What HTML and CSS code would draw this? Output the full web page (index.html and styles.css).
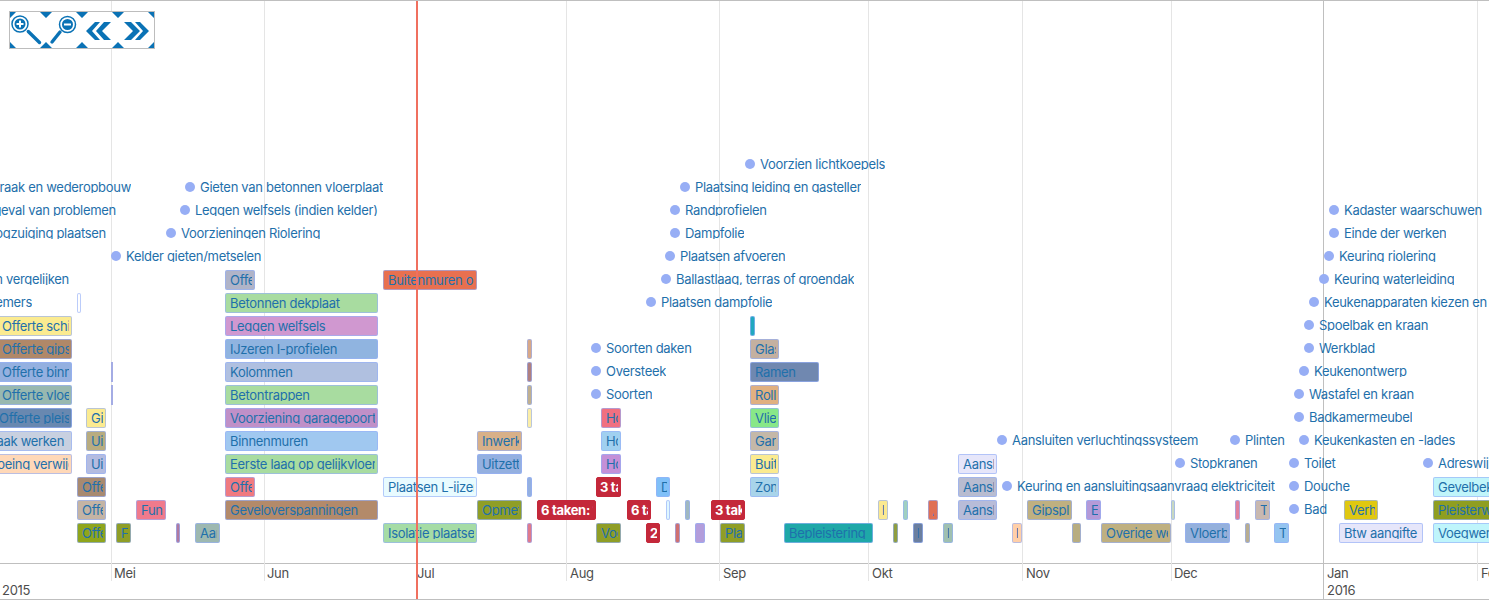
FILE: index.html
```html
<!DOCTYPE html>
<html lang="nl">
<head>
<meta charset="utf-8">
<title>Tijdlijn</title>
<link rel="stylesheet" href="styles.css">
</head>
<body>
<div class="timeline">
  <div class="canvas">
    <i class="grid" style="left:111px"></i><i class="grid" style="left:264px"></i><i class="grid" style="left:416px"></i><i class="grid" style="left:566px"></i><i class="grid" style="left:719px"></i><i class="grid" style="left:868px"></i><i class="grid" style="left:1022px"></i><i class="grid" style="left:1171px"></i><i class="grid major" style="left:1323px"></i><i class="grid" style="left:1477px"></i>

    <div class="nav">
      <div class="nav-btn"><svg viewBox="0 0 36 36"><path class="corner" d="M0 0h6L0 6zM36 0h-6l6 6zM0 36h6l-6-6zM36 36h-6l6-6z"/><circle class="ring" cx="10" cy="12" r="8"/><circle class="disc" cx="10" cy="12" r="5.500"/><path class="glyph" d="M6.500 12h7M10 8.500v7"/><path class="handle" d="M18.300 19.500L29.500 30.500"/></svg></div>
      <div class="nav-btn"><svg viewBox="0 0 36 36"><path class="corner" d="M0 0h6L0 6zM36 0h-6l6 6zM0 36h6l-6-6zM36 36h-6l6-6z"/><circle class="ring" cx="21.500" cy="12.500" r="8"/><circle class="disc" cx="21.500" cy="12.500" r="5.500"/><path class="glyph" d="M18 12.500h7"/><path class="handle" d="M14 20L6 30"/></svg></div>
      <div class="nav-btn"><svg viewBox="0 0 36 36"><path class="corner" d="M0 0h6L0 6zM36 0h-6l6 6zM0 36h6l-6-6zM36 36h-6l6-6z"/><path class="chev" d="M4 19l9-9h5l-8 9 8 9h-5zM14 19l8-9h7l-9 9 9 9h-7z"/></svg></div>
      <div class="nav-btn"><svg viewBox="0 0 36 36"><path class="corner" d="M0 0h6L0 6zM36 0h-6l6 6zM0 36h6l-6-6zM36 36h-6l6-6z"/><path class="chev" d="M6 10h7l9 9-9 9H6l9-9zM17 10h5l9 9-9 9h-5l8-9z"/></svg></div>
    </div>

    <!-- row 1 -->
    <div class="item r1" style="left:77px;width:29px;background:#8fa51c"><span>Offerte</span></div>
    <div class="item r1" style="left:116px;width:15px;background:#8f9e26"><span>Fu</span></div>
    <div class="item r1 thin" style="left:176px;width:4px;background:#b07aa0"></div>
    <div class="item r1" style="left:195px;width:25px;background:#9db8b0"><span>Aannemer</span></div>
    <div class="item r1" style="left:383px;width:94px;background:#a5dca5"><span>Isolatie plaatsen</span></div>
    <div class="item r1 thin" style="left:527px;width:5px;background:#e07a8c"></div>
    <div class="item r1" style="left:596px;width:25px;background:#8f9e26"><span>Vochtwering</span></div>
    <div class="item r1 count" style="left:646px;width:14px"><span>2</span></div>
    <div class="item r1 thin" style="left:675px;width:5px;background:#d07070"></div>
    <div class="item r1 thin" style="left:695px;width:10px;background:#b39ddb"></div>
    <div class="item r1" style="left:720px;width:25px;background:#8f9e26"><span>Plaatsen</span></div>
    <div class="item r1" style="left:784px;width:89px;background:#1ea8a8"><span>Bepleistering</span></div>
    <div class="item r1 thin" style="left:893px;width:5px;background:#8f9e40"></div>
    <div class="item r1" style="left:913px;width:10px;background:#6b7f9f"><span class="tiny">l</span></div>
    <div class="item r1" style="left:943px;width:10px;background:#9fc0b0"><span class="tiny">l</span></div>
    <div class="item r1" style="left:1012px;width:10px;background:#ffcfa8"><span class="tiny">l</span></div>
    <div class="item r1 thin" style="left:1072px;width:9px;background:#b8ad80"></div>
    <div class="item r1" style="left:1101px;width:70px;background:#bfb080"><span>Overige werken</span></div>
    <div class="item r1" style="left:1185px;width:45px;background:#94b0dc"><span>Vloerbekleding</span></div>
    <div class="item r1 thin" style="left:1245px;width:5px;background:#b8ad90"></div>
    <div class="item r1" style="left:1274px;width:15px;background:#94c4f0"><span>T</span></div>
    <div class="item r1" style="left:1339px;width:84px;background:#e6e6fa"><span>Btw aangifte</span></div>
    <div class="item r1" style="left:1433px;width:70px;background:#bff5fb"><span>Voegwerken</span></div>

    <!-- row 2 -->
    <div class="item r2" style="left:77px;width:29px;background:#c4b4a4"><span>Offerte</span></div>
    <div class="item r2" style="left:136px;width:30px;background:#f07a8c"><span>Fundering</span></div>
    <div class="item r2" style="left:225px;width:153px;background:#b38a6a"><span>Geveloverspanningen</span></div>
    <div class="item r2" style="left:477px;width:45px;background:#8f9e26"><span>Opmetselen</span></div>
    <div class="item r2 count" style="left:537px;width:59px"><span>6 taken: 1</span></div>
    <div class="item r2 count" style="left:627px;width:24px"><span>6 taken</span></div>
    <div class="item r2 thin" style="left:666px;width:4px;background:#e0f7ff"></div>
    <div class="item r2 thin" style="left:685px;width:5px;background:#a0b8c0"></div>
    <div class="item r2 count" style="left:711px;width:34px"><span>3 taken</span></div>
    <div class="item r2" style="left:878px;width:10px;background:#fbe98f"><span class="tiny">l</span></div>
    <div class="item r2 thin" style="left:903px;width:5px;background:#a0d0c0"></div>
    <div class="item r2" style="left:928px;width:10px;background:#e07055"><span class="tiny">,</span></div>
    <div class="item r2" style="left:958px;width:39px;background:#b8bcd8"><span>Aansluiten</span></div>
    <div class="item r2" style="left:1027px;width:45px;background:#bfb080"><span>Gipsplaten</span></div>
    <div class="item r2" style="left:1086px;width:15px;background:#b49ad8"><span>E</span></div>
    <div class="item r2 thin" style="left:1171px;width:4px;background:#c8d8c0"></div>
    <div class="item r2 thin" style="left:1235px;width:5px;background:#e0809c"></div>
    <div class="item r2" style="left:1255px;width:15px;background:#c8b8b0"><span>T</span></div>
    <div class="item r2" style="left:1344px;width:34px;background:#e0c810"><span>Verhuis</span></div>
    <div class="item r2" style="left:1433px;width:70px;background:#8f9e20"><span>Pleisterwerk</span></div>

    <!-- row 3 -->
    <div class="item r3" style="left:77px;width:29px;background:#a88a70"><span>Offerte</span></div>
    <div class="item r3" style="left:225px;width:30px;background:#f07a80"><span>Offerte</span></div>
    <div class="item r3" style="left:383px;width:94px;background:#e8fbff"><span>Plaatsen L-ijzers</span></div>
    <div class="item r3 thin" style="left:527px;width:5px;background:#94b0e0"></div>
    <div class="item r3 count" style="left:596px;width:25px"><span>3 taken</span></div>
    <div class="item r3" style="left:656px;width:14px;background:#80c0f8"><span>D</span></div>
    <div class="item r3" style="left:750px;width:29px;background:#a8d4ea"><span>Zonwering</span></div>
    <div class="item r3" style="left:958px;width:39px;background:#b8bcd0"><span>Aansluiten</span></div>
    <div class="item r3" style="left:1433px;width:70px;background:#c0f5fa"><span>Gevelbekleding</span></div>

    <!-- row 4 -->
    <div class="item r4" style="left:-33px;width:105px;background:#ffd8b8"><span>Bevloeing verwijderen</span></div>
    <div class="item r4" style="left:86px;width:20px;background:#b4bce0"><span>Uitzet</span></div>
    <div class="item r4" style="left:225px;width:153px;background:#a8dca0"><span>Eerste laag op gelijkvloer</span></div>
    <div class="item r4" style="left:477px;width:45px;background:#94b0e0"><span>Uitzetten</span></div>
    <div class="item r4" style="left:601px;width:20px;background:#c490d8"><span>Hout</span></div>
    <div class="item r4" style="left:750px;width:29px;background:#fbeb90"><span>Buiten</span></div>
    <div class="item r4" style="left:958px;width:39px;background:#e6e6fa"><span>Aansluiten</span></div>

    <!-- row 5 -->
    <div class="item r5" style="left:-34px;width:106px;background:#c8d0e0"><span>Afbraak werken</span></div>
    <div class="item r5" style="left:86px;width:20px;background:#b8ac80"><span>Uitzet</span></div>
    <div class="item r5" style="left:225px;width:153px;background:#a0c8f0"><span>Binnenmuren</span></div>
    <div class="item r5" style="left:477px;width:45px;background:#d8b088"><span>Inwerken</span></div>
    <div class="item r5" style="left:601px;width:20px;background:#a0d0f0"><span>Hout</span></div>
    <div class="item r5" style="left:750px;width:29px;background:#c4b8a8"><span>Garage</span></div>

    <!-- row 6 -->
    <div class="item r6" style="left:-6px;width:78px;background:#6888b0"><span>Offerte pleisterwerk</span></div>
    <div class="item r6" style="left:86px;width:20px;background:#fbeb90"><span>Gi</span></div>
    <div class="item r6" style="left:225px;width:153px;background:#c090c8"><span>Voorziening garagepoort</span></div>
    <div class="item r6 thin" style="left:527px;width:5px;background:#fbeea8"></div>
    <div class="item r6" style="left:601px;width:20px;background:#f07080"><span>Hout</span></div>
    <div class="item r6" style="left:750px;width:29px;background:#88e888"><span>Vliegen</span></div>

    <!-- row 7 -->
    <div class="item r7" style="left:-3px;width:75px;background:#98b8b0"><span>Offerte vloerbekleding</span></div>
    <div class="item r7 sliver" style="left:111px;width:2px"></div>
    <div class="item r7" style="left:225px;width:153px;background:#a8dca0"><span>Betontrappen</span></div>
    <div class="item r7 thin" style="left:527px;width:5px;background:#c0b090"></div>
    <div class="item r7" style="left:750px;width:29px;background:#e0b080"><span>Rolluiken</span></div>

    <!-- row 8 -->
    <div class="item r8" style="left:-3px;width:75px;background:#94b0e0"><span>Offerte binnendeuren</span></div>
    <div class="item r8 sliver" style="left:111px;width:2px"></div>
    <div class="item r8" style="left:225px;width:153px;background:#b0c0e0"><span>Kolommen</span></div>
    <div class="item r8 thin" style="left:527px;width:5px;background:#b08080"></div>
    <div class="item r8" style="left:750px;width:69px;background:#7088b0"><span>Ramen</span></div>

    <!-- row 9 -->
    <div class="item r9" style="left:-3px;width:75px;background:#b08868"><span>Offerte gipsplaten</span></div>
    <div class="item r9" style="left:225px;width:153px;background:#90b4e0"><span>IJzeren I-profielen</span></div>
    <div class="item r9 thin" style="left:527px;width:5px;background:#d8a888"></div>
    <div class="item r9" style="left:750px;width:29px;background:#c4b0a0"><span>Glas</span></div>

    <!-- row 10 -->
    <div class="item r10" style="left:-3px;width:75px;background:#fbeb90"><span>Offerte schilderwerk</span></div>
    <div class="item r10" style="left:225px;width:153px;background:#d098d0"><span>Leggen welfsels</span></div>
    <div class="item r10 thin" style="left:750px;width:5px;background:#20a8c0"></div>

    <!-- row 11 -->
    <div class="item r11 thin" style="left:77px;width:4px;background:#fff"></div>
    <div class="item r11" style="left:225px;width:153px;background:#a8dca0"><span>Betonnen dekplaat</span></div>

    <!-- row 12 -->
    <div class="item r12" style="left:225px;width:30px;background:#b0b4c8"><span>Offerte</span></div>
    <div class="item r12" style="left:383px;width:94px;background:#e87050"><span>Buitenmuren optrekken</span></div>

    <!-- points -->
    <div class="point r2" style="left:1289px"><b></b><span>Bad</span></div>
    <div class="point r3" style="left:1289px"><b></b><span>Douche</span></div>
    <div class="point r3" style="left:1002px"><b></b><span>Keuring en aansluitingsaanvraag elektriciteit</span></div>
    <div class="point r4" style="left:1175px"><b></b><span>Stopkranen</span></div>
    <div class="point r4" style="left:1289px"><b></b><span>Toilet</span></div>
    <div class="point r4" style="left:1423px"><b></b><span>Adreswijziging</span></div>
    <div class="point r5" style="left:997px"><b></b><span>Aansluiten verluchtingssysteem</span></div>
    <div class="point r5" style="left:1230px"><b></b><span>Plinten</span></div>
    <div class="point r5" style="left:1299px"><b></b><span>Keukenkasten en -lades</span></div>
    <div class="point r6" style="left:1294px"><b></b><span>Badkamermeubel</span></div>
    <div class="point r7" style="left:591px"><b></b><span>Soorten</span></div>
    <div class="point r7" style="left:1294px"><b></b><span>Wastafel en kraan</span></div>
    <div class="point r8" style="left:591px"><b></b><span>Oversteek</span></div>
    <div class="point r8" style="left:1299px"><b></b><span>Keukenontwerp</span></div>
    <div class="point r9" style="left:591px"><b></b><span>Soorten daken</span></div>
    <div class="point r9" style="left:1304px"><b></b><span>Werkblad</span></div>
    <div class="point r10" style="left:1304px"><b></b><span>Spoelbak en kraan</span></div>
    <div class="point r11 off" style="right:1457px"><span>Aannemers</span></div>
    <div class="point r11" style="left:646px"><b></b><span>Plaatsen dampfolie</span></div>
    <div class="point r11" style="left:1309px"><b></b><span>Keukenapparaten kiezen en bestellen</span></div>
    <div class="point r12 off" style="right:1420px"><span>Offerten vergelijken</span></div>
    <div class="point r12" style="left:661px"><b></b><span>Ballastlaag, terras of groendak</span></div>
    <div class="point r12" style="left:1319px"><b></b><span>Keuring waterleiding</span></div>
    <div class="point r13" style="left:111px"><b></b><span>Kelder gieten/metselen</span></div>
    <div class="point r13" style="left:665px"><b></b><span>Plaatsen afvoeren</span></div>
    <div class="point r13" style="left:1324px"><b></b><span>Keuring riolering</span></div>
    <div class="point r14 off" style="right:1383px"><span>Hoogzuiging plaatsen</span></div>
    <div class="point r14" style="left:166px"><b></b><span>Voorzieningen Riolering</span></div>
    <div class="point r14" style="left:670px"><b></b><span>Dampfolie</span></div>
    <div class="point r14" style="left:1329px"><b></b><span>Einde der werken</span></div>
    <div class="point r15 off" style="right:1373px"><span>In geval van problemen</span></div>
    <div class="point r15" style="left:180px"><b></b><span>Leggen welfsels (indien kelder)</span></div>
    <div class="point r15" style="left:670px"><b></b><span>Randprofielen</span></div>
    <div class="point r15" style="left:1329px"><b></b><span>Kadaster waarschuwen</span></div>
    <div class="point r16 off" style="right:1358px"><span>Afbraak en wederopbouw</span></div>
    <div class="point r16" style="left:185px"><b></b><span>Gieten van betonnen vloerplaat</span></div>
    <div class="point r16" style="left:680px"><b></b><span>Plaatsing leiding en gasteller</span></div>
    <div class="point r17" style="left:745px"><b></b><span>Voorzien lichtkoepels</span></div>

    <i class="now"></i>
  </div>

  <div class="axis">
    <span class="month" style="left:114px">Mei</span>
    <span class="month" style="left:267px">Jun</span>
    <span class="month" style="left:417px">Jul</span>
    <span class="month" style="left:570px">Aug</span>
    <span class="month" style="left:723px">Sep</span>
    <span class="month" style="left:872px">Okt</span>
    <span class="month" style="left:1026px">Nov</span>
    <span class="month" style="left:1174px">Dec</span>
    <span class="month" style="left:1327px">Jan</span>
    <span class="month last" style="left:1481px">Feb</span>
    <span class="year" style="left:2px">2015</span>
    <span class="year" style="left:1327px">2016</span>
  </div>
</div>
</body>
</html>
```

FILE: styles.css
```css
* { box-sizing: border-box; }
html, body { margin: 0; height: 100%; background: #fff; overflow: hidden; }
body { font-family: "Inter", "Liberation Sans", sans-serif; font-size: 13px; letter-spacing: -0.3px; color: #1f70ab; }

.timeline {
  display: flex;
  flex-direction: column;
  height: 600px;
  border-top: 1px solid #bfbfbf;
  border-bottom: 1px solid #bfbfbf;
  position: relative;
  overflow: hidden;
}
.canvas { position: relative; flex: 1; border-bottom: 1px solid #bfbfbf; }

.grid { position: absolute; top: 0; height: 580px; width: 1px; background: #e5e5e5; z-index: 0; }
.grid.major { height: 598px; background: #bfbfbf; }
.now { position: absolute; left: 416px; top: 0; height: 598px; width: 2px; background: #f0705f; z-index: 5; }

.nav {
  position: absolute; left: 9px; top: 10px; z-index: 6;
  display: flex; width: 146px; height: 38px;
  border: 1px solid #bdbdbd; background: #fff;
}
.nav-btn { flex: 1; min-width: 0; }
.nav-btn svg { display: block; width: 100%; height: 100%; }
.corner { fill: #0a72b5; }
.ring { fill: none; stroke: #0a72b5; stroke-width: 1.5; }
.disc { fill: #0a72b5; }
.glyph { fill: none; stroke: #fff; stroke-width: 2; }
.handle { fill: none; stroke: #0a72b5; stroke-width: 3.4; stroke-linecap: round; }
.chev { fill: #0a72b5; }

.r1 { --row: 522px; } .r2 { --row: 499px; } .r3 { --row: 476px; } .r4 { --row: 453px; }
.r5 { --row: 430px; } .r6 { --row: 407px; } .r7 { --row: 384px; } .r8 { --row: 361px; }
.r9 { --row: 338px; } .r10 { --row: 315px; } .r11 { --row: 292px; } .r12 { --row: 269px; }
.r13 { --row: 246px; } .r14 { --row: 223px; } .r15 { --row: 200px; } .r16 { --row: 177px; }
.r17 { --row: 154px; }

.item {
  position: absolute; top: var(--row); height: 20px; z-index: 2;
  display: flex;
  padding: 1px 2px 0 4px;
  border: 1px solid rgba(151, 176, 248, 0.65); border-radius: 2px;
}
.item span { display: block; min-width: 0; flex: 1; height: 14px; line-height: 16px; white-space: nowrap; overflow: hidden; }
.item span.tiny { flex: none; width: 2px; margin-left: -1px; }
.item.thin { padding: 0; }
.item.sliver { padding: 0; border: 0; border-radius: 0; background: #a4ace4; }
.item.count { background: #c4283a; border-color: #c4283a; color: #fff; font-weight: 700; padding-left: 3px; }

.point {
  position: absolute; top: var(--row); height: 20px; z-index: 2;
  display: flex; white-space: nowrap;
}
.point b { width: 10px; height: 10px; margin: 4px 5px 0 0; border-radius: 50%; background: #97aef5; flex: none; }
.point span { height: 14px; margin-top: 1px; line-height: 16px; overflow: hidden; }

.axis { position: relative; height: 35px; color: #4d4d4d; flex: none; }
.month, .year { position: absolute; white-space: nowrap; }
.month { top: 1px; }
.month.last { width: 8px; overflow: hidden; }
.year { top: 18px; }
```
